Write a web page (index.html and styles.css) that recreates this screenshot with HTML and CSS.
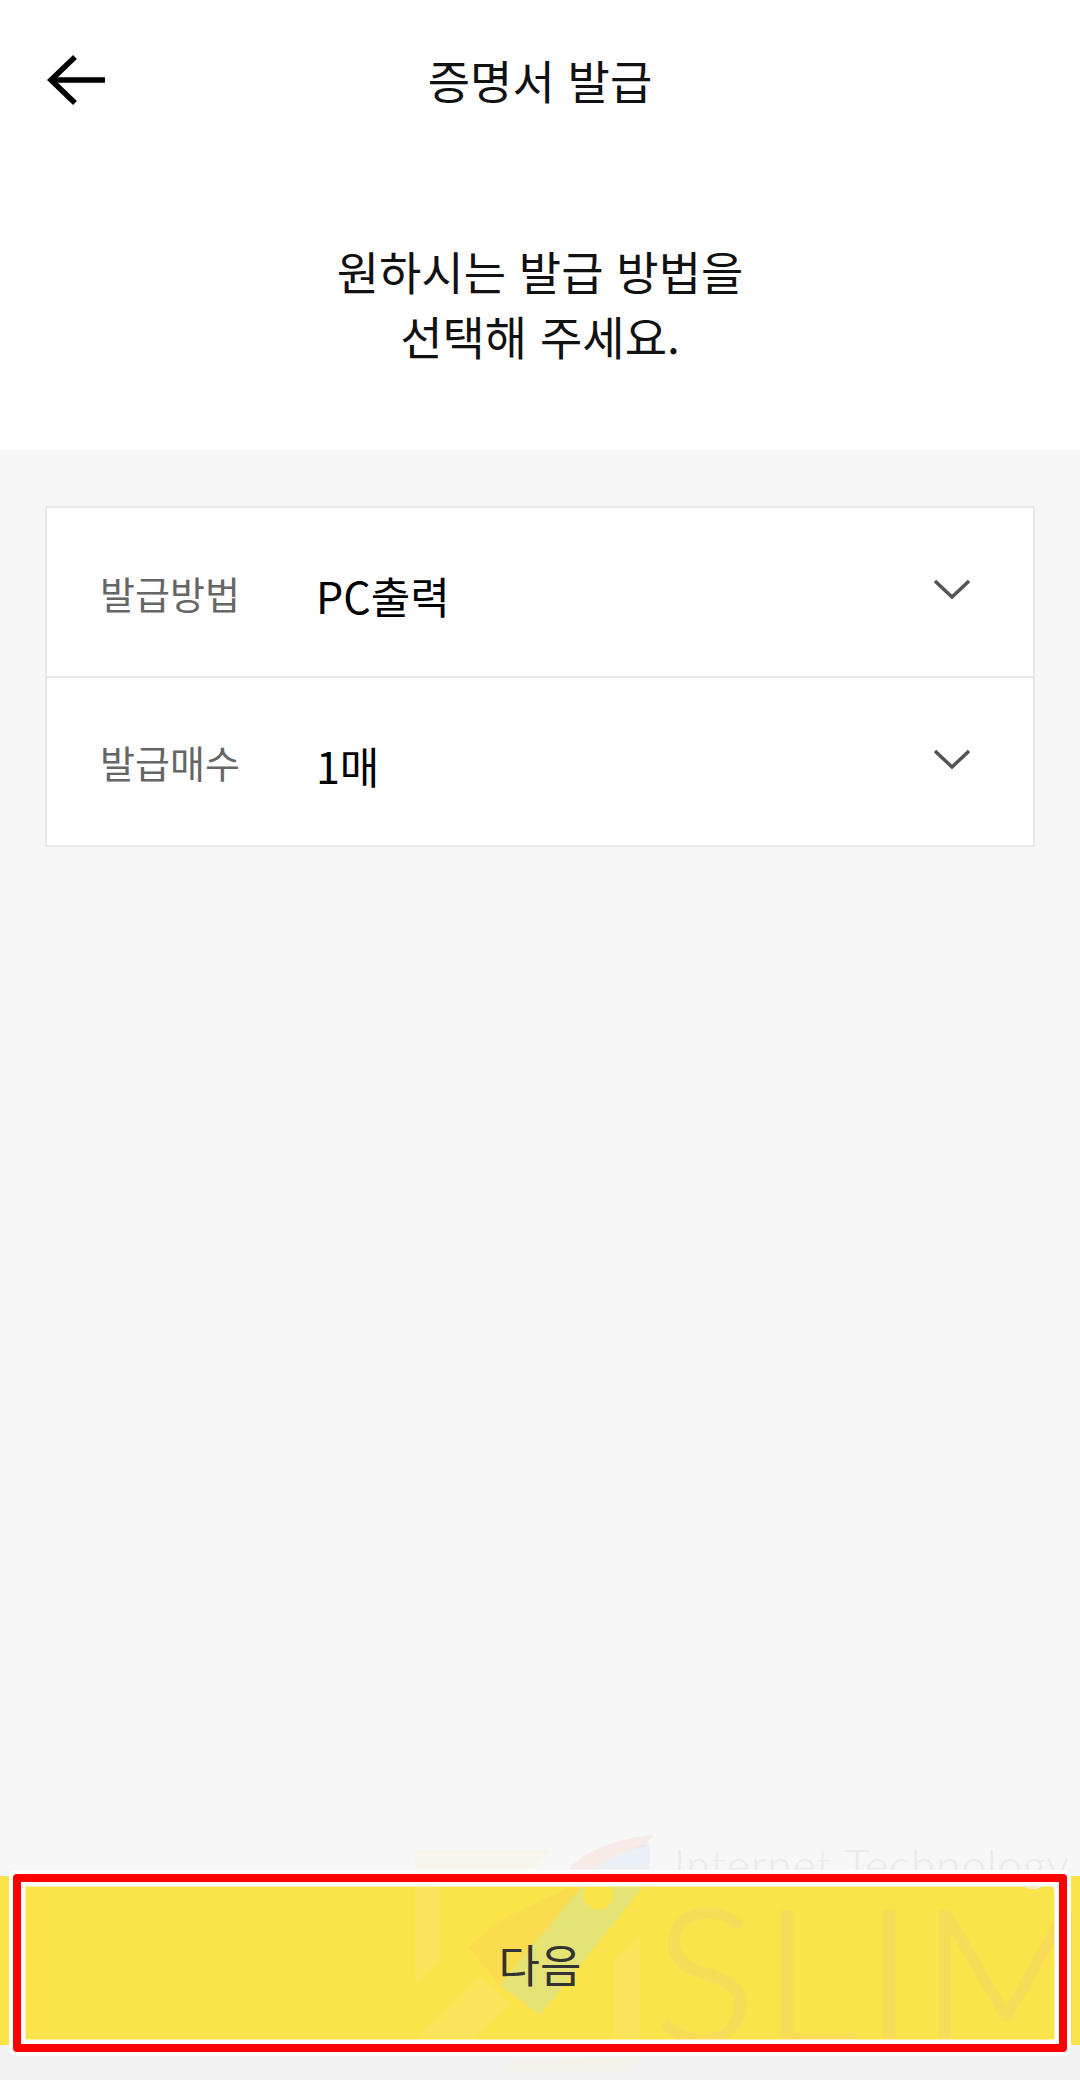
FILE: index.html
```html
<!DOCTYPE html>
<html lang="ko">
<head>
  <meta charset="UTF-8">
  <meta name="viewport" content="width=device-width, initial-scale=1.0">
  <title>증명서 발급</title>
  <link rel="stylesheet" href="styles.css">
</head>
<body>
  <header class="topbar">
    <svg class="back-icon" viewBox="0 0 60 50" aria-hidden="true">
      <path d="M28 2 L4 25 L28 48 M4 25 H58"/>
    </svg>
    <h1 class="title">증명서 발급</h1>
  </header>
  <p class="prompt">원하시는 발급 방법을<br>선택해 주세요.</p>
  <main class="content">
    <div class="card">
      <div class="row">
        <span class="label">발급방법</span>
        <span class="value">PC출력</span>
        <svg class="chevron" viewBox="0 0 36 20" aria-hidden="true"><path d="M1 2 L18 18 L35 2"/></svg>
      </div>
      <div class="row">
        <span class="label">발급매수</span>
        <span class="value">1매</span>
        <svg class="chevron" viewBox="0 0 36 20" aria-hidden="true"><path d="M1 2 L18 18 L35 2"/></svg>
      </div>
    </div>
  </main>
  <div class="next-bar">
    <button class="next-btn">다음</button>
    <div class="highlight"></div>
  </div>
  <div class="footer-strip"></div>

  <!-- watermark lies over the page, under the red box -->
  <div class="watermark">
    <svg class="wm-logo" viewBox="0 0 840 750" aria-hidden="true">
      <path class="wm-pale" d="M45 60 H455 L400 118 H45 Z"/>
      <path class="wm-pale" d="M45 170 H120 V395 L45 460 Z"/>
      <path class="wm-pale" d="M720 320 V625 H640 V395 Z"/>
      <path class="wm-pale" d="M50 625 L240 440 L330 520 L225 625 Z"/>
      <path class="wm-pale" d="M320 695 L720 680 L690 725 L320 725 Z"/>
      <path class="wm-orange" d="M510 170 H545 L300 465 L205 350 L300 270 Z"/>
      <path class="wm-green" d="M545 170 H730 L420 555 L300 465 Z"/>
      <circle class="wm-dot" cx="595" cy="195" r="45"/>
      <path class="wm-pink" d="M505 118 C560 60 650 25 760 15 L735 50 C670 60 620 85 590 118 Z"/>
      <path class="wm-blue" d="M590 118 C620 85 680 60 750 40 V118 Z"/>
    </svg>
    <span class="wm-sub">Internet Technology</span>
    <span class="wm-name">SLIM</span>
  </div>
</body>
</html>
```

FILE: styles.css
```css
* {
  box-sizing: border-box;
}
body {
  margin: 0;
  width: 1080px;
  height: 2080px;
  position: relative;
  overflow: hidden;
  display: flex;
  flex-direction: column;
  background: #fff;
  color: #111;
  font-family: "Noto Sans CJK KR", "Noto Sans", sans-serif;
}
.topbar {
  height: 160px;
  position: relative;
  display: flex;
  align-items: center;
  justify-content: center;
}
.back-icon {
  position: absolute;
  left: 47px;
  top: 55px;
  width: 60px;
  height: 50px;
}
.back-icon path {
  fill: none;
  stroke: #000;
  stroke-width: 5.5;
}
.title {
  margin: 0;
  font-size: 46px;
  font-weight: 400;
  line-height: 1.2;
}
.prompt {
  margin: 0;
  height: 290px;
  padding-top: 78px;
  text-align: center;
  font-size: 46px;
  line-height: 65px;
}
.content {
  flex: 1;
  background: #f7f7f7;
  padding: 56px 45px 0;
}
.card {
  background: #fff;
  border: 2px solid #e8e8e8;
}
.row {
  height: 168px;
  padding: 0 63px 0 53px;
  display: flex;
  align-items: center;
}
.row + .row {
  height: 169px;
  border-top: 2px solid #e8e8e8;
}
.label {
  width: 216px;
  font-size: 38px;
  color: #666;
}
.value {
  flex: 1;
  font-size: 43px;
  color: #000;
  padding-top: 6px;
}
.chevron {
  width: 36px;
  height: 20px;
  margin-bottom: 6px;
}
.chevron path {
  fill: none;
  stroke: #555;
  stroke-width: 3.5;
}
.next-bar {
  height: 169px;
  position: relative;
  background: #fbe34a;
}
.next-btn {
  width: 100%;
  height: 100%;
  padding: 6px 0 0;
  border: none;
  background: none;
  position: relative;
  z-index: 3;
  font-family: inherit;
  font-size: 45px;
  color: #333;
}
.highlight {
  position: absolute;
  z-index: 4;
  left: 13px;
  top: -2px;
  width: 1054px;
  height: 178px;
  border: 8px solid #f00;
  border-radius: 4px;
  box-shadow: 0 0 0 4px #fff, inset 0 0 0 4.5px #fff;
}
.footer-strip {
  height: 35px;
  background: #f2f2f2;
}
.watermark {
  position: absolute;
  z-index: 1;
  left: 400px;
  top: 1830px;
  width: 672px;
  height: 250px;
  overflow: hidden;
  pointer-events: none;
}
.wm-logo {
  position: absolute;
  left: 0;
  top: 0;
  width: 280px;
  height: 250px;
}
.wm-pale { fill: rgba(255, 240, 185, 0.17); }
.wm-orange { fill: rgba(250, 190, 100, 0.18); }
.wm-green { fill: rgba(190, 225, 200, 0.35); }
.wm-dot { fill: #fbe34a; }
.wm-pink { fill: rgba(255, 190, 170, 0.2); }
.wm-blue { fill: rgba(190, 225, 245, 0.25); }
.wm-sub {
  position: absolute;
  left: 274px;
  top: 12px;
  font-family: "Lato", sans-serif;
  font-weight: 300;
  font-size: 44px;
  line-height: 1;
  letter-spacing: 1px;
  white-space: nowrap;
  color: #ebebeb;
}
.wm-name {
  position: absolute;
  left: 255px;
  top: 48px;
  font-family: "Lato", sans-serif;
  font-weight: 300;
  font-size: 186px;
  line-height: 1;
  letter-spacing: 8px;
  white-space: nowrap;
  color: #f8dc58;
  -webkit-text-stroke: 3px #f8dc58;
}
```
